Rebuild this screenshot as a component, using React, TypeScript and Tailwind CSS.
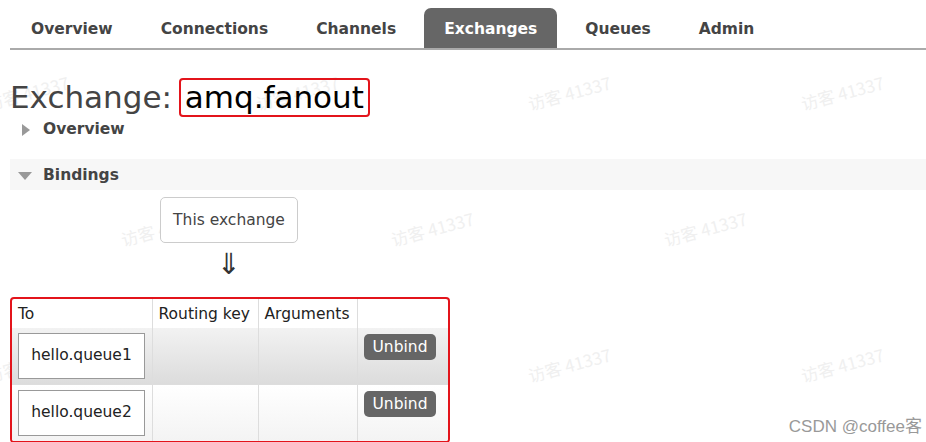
import React from 'react';

const tabs = ['Overview', 'Connections', 'Channels', 'Exchanges', 'Queues', 'Admin'];

const marks: [number, number][] = [
  [-15, 80], [255, 80], [527, 80], [800, 80],
  [120, 216], [390, 216], [663, 216], [935, 216],
  [-15, 352], [255, 352], [527, 352], [800, 352],
];

const Watermarks = () => (
  <div className="pointer-events-none absolute inset-0 overflow-hidden">
    {marks.map(([x, y], i) => (
      <span
        key={i}
        className="absolute text-[17px] text-[#f0f0f0] -rotate-[15deg] whitespace-nowrap"
        style={{ left: x, top: y, fontFamily: '"Noto Sans CJK SC", sans-serif' }}
      >
        访客 41337
      </span>
    ))}
  </div>
);

const QueueRow = ({ name, shade }: { name: string; shade: string }) => (
  <tr className={shade}>
    <td className="border-r border-[#ddd] px-[6px] py-[5px] align-top">
      <div className="w-[127px] h-[46px] border border-[#999] bg-white flex items-center justify-center text-[15.5px] text-[#222]">
        {name}
      </div>
    </td>
    <td className="border-r border-[#ddd]"></td>
    <td className="border-r border-[#ddd]"></td>
    <td className="align-top pl-[6px] pt-[6px]">
      <span className="inline-block bg-[#666] text-white text-[15.5px] leading-[26px] px-[9px] rounded-[5px]">Unbind</span>
    </td>
  </tr>
);

export default function App() {
  return (
    <div
      className="relative w-[926px] h-[442px] bg-white overflow-hidden text-[#444]"
      style={{ fontFamily: '"DejaVu Sans", Verdana, sans-serif' }}
    >
      <Watermarks />

      {/* nav */}
      <div className="relative h-[50px] ml-[10px] border-b-2 border-[#aaa]">
        <div className="flex items-end h-full -ml-[3px] pt-[8px]">
          {tabs.map(t => (
            <div
              key={t}
              className={`h-[40px] flex items-center px-[20px] pt-[3px] mx-[4px] text-[15.5px] font-bold rounded-t-[7px] ${
                t === 'Exchanges' ? 'bg-[#666] text-white' : 'text-[#444]'
              }`}
            >
              {t}
            </div>
          ))}
        </div>
      </div>

      {/* heading */}
      <div className="relative flex items-center ml-[10px] mt-[27px] h-[40px]">
        <span className="text-[31px] text-[#444] leading-none">Exchange:&nbsp;</span>
        <span className="-ml-[3px] border-2 border-[#e3141b] rounded-[4px] px-[4px] h-[39px] flex items-center text-[31px] text-black leading-none">
          amq.fanout
        </span>
      </div>

      <div className="relative flex items-center ml-[22px] h-[22px] mt-[2px]">
        <svg width="9" height="12" viewBox="0 0 9 12"><path d="M0 0 L8 6 L0 12 Z" fill="#999" /></svg>
        <span className="ml-[12px] text-[15.5px] font-bold text-[#444]">Overview</span>
      </div>

      <div className="relative flex items-center ml-[10px] mt-[18px] h-[31px] bg-[#f7f7f7]">
        <svg className="ml-[8px] mt-[3px]" width="14" height="8" viewBox="0 0 14 8"><path d="M0 0 L14 0 L7 8 Z" fill="#999" /></svg>
        <span className="ml-[11px] mt-[3px] text-[15.5px] font-bold text-[#444]">Bindings</span>
      </div>

      {/* diagram */}
      <div className="relative ml-[160px] mt-[7px] w-[138px] h-[46px] border border-[#ccc] rounded-[5px] flex items-center justify-center text-[15.5px] text-[#444] bg-white pt-[2px]">
        This exchange
      </div>
      <div className="relative ml-[160px] w-[138px] text-center text-[29px] leading-[30px] mt-[6px] text-[#333]">⇓</div>

      {/* table */}
      <div className="relative ml-[10px] mt-[18px] w-[440px] border-2 border-[#e3141b] rounded-[4px] overflow-hidden bg-white">
        <table className="w-full border-collapse text-[15.5px] text-[#222]">
          <thead>
            <tr className="h-[29px] text-left">
              <th className="font-normal px-[6px] pt-[2px] w-[140px] border-r border-[#ddd]">To</th>
              <th className="font-normal px-[6px] pt-[2px] w-[106px] border-r border-[#ddd]">Routing key</th>
              <th className="font-normal px-[6px] pt-[2px] w-[99px] border-r border-[#ddd]">Arguments</th>
              <th></th>
            </tr>
          </thead>
          <tbody>
            <QueueRow name="hello.queue1" shade="bg-gradient-to-b from-[#f2f2f2] to-[#dcdcdc] border-b border-[#ddd]" />
            <QueueRow name="hello.queue2" shade="bg-gradient-to-b from-white to-[#f3f3f3]" />
          </tbody>
        </table>
      </div>

      <div
        className="absolute right-[4px] bottom-[3px] text-[17px] text-[#999]"
        style={{ fontFamily: '"Liberation Sans", "Noto Sans CJK SC", sans-serif' }}
      >
        CSDN @coffee客
      </div>
    </div>
  );
}
